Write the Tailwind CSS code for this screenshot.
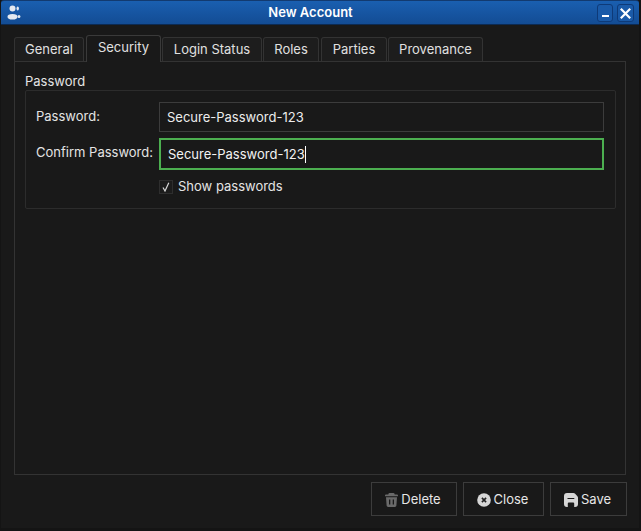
<!DOCTYPE html>
<html lang="en">
<head>
<meta charset="UTF-8">
<title>New Account</title>
<script src="https://cdn.jsdelivr.net/npm/@tailwindcss/browser@4"></script>
</head>
<body class="bg-[#141414] font-['Inter',sans-serif] text-[13px] text-[#e4e4e4] overflow-hidden">
<div class="w-[641px] h-[531px] flex flex-col bg-[#191919] border-l border-r-2 border-b-[3px] border-[#141414]">
  <!-- title bar -->
  <header class="relative h-[25px] shrink-0 flex items-center justify-center pr-[19px] rounded-t-[3px] border-t border-b border-t-[#123a70] border-b-[#0c2a52] bg-gradient-to-b from-[#1a5fb0] to-[#134c94]">
    <svg class="absolute left-[5px] top-[4px]" width="16" height="16" viewBox="0 0 16 16" fill="#e4e9f0">
      <ellipse cx="6.5" cy="3.5" rx="3" ry="3"/><ellipse cx="11.7" cy="3.5" rx="1.2" ry="2"/>
      <ellipse cx="6.5" cy="11.7" rx="5" ry="2.8"/><ellipse cx="13" cy="11.5" rx="1.4" ry="1.6"/>
    </svg>
    <h1 class="font-semibold text-[13px] text-white mt-[1px]">New Account</h1>
    <div class="absolute right-[5px] top-[3px] flex gap-[4px]">
      <button class="w-[16px] h-[18px] flex items-center justify-center rounded-[3px] border border-[#0e3a78] bg-[#1a5aa8]">
        <span class="w-[7px] h-[2px] mt-[5px] bg-white"></span>
      </button>
      <button class="w-[17px] h-[18px] flex items-center justify-center rounded-[3px] border border-[#0e3a78] bg-[#1a5aa8]">
        <svg width="11" height="11" viewBox="0 0 11 11" stroke="white" stroke-width="2.2"><path d="M.8.8 10.200 10.200M10.200.8 .8 10.200"/></svg>
      </button>
    </div>
  </header>

  <!-- tabs -->
  <div class="flex items-end h-[36px] pl-[13px] shrink-0 relative z-10 text-[#e0e0e0]">
    <div class="w-[70px] h-[24px] flex items-center justify-center rounded-t-[3px] border border-b-0 border-[#333] bg-[#1d1d1d]">General</div>
    <div class="w-[75px] h-[27px] ml-[2px] mb-[-1px] pb-[2px] flex items-center justify-center rounded-t-[3px] border border-b-0 border-[#3a3a3a] bg-[#191919]">Security</div>
    <div class="w-[100px] h-[24px] ml-[1px] flex items-center justify-center rounded-t-[3px] border border-b-0 border-[#333] bg-[#1d1d1d]">Login Status</div>
    <div class="w-[56px] h-[24px] ml-[1px] flex items-center justify-center rounded-t-[3px] border border-b-0 border-[#333] bg-[#1d1d1d]">Roles</div>
    <div class="w-[66px] h-[24px] ml-[2px] flex items-center justify-center rounded-t-[3px] border border-b-0 border-[#333] bg-[#1d1d1d]">Parties</div>
    <div class="w-[95px] h-[24px] ml-[1px] flex items-center justify-center rounded-t-[3px] border border-b-0 border-[#333] bg-[#1d1d1d]">Provenance</div>
  </div>

  <!-- tab pane -->
  <main class="ml-[13px] w-[612px] h-[414px] shrink-0 border border-[#333] pl-[10px] pr-[9px] pt-[11px]">
    <h2 class="leading-[16px] mb-[1px]">Password</h2>
    <section class="h-[119px] border border-[#2c2c2c] rounded-[2px] pl-[10px] pr-[11px] pt-[11px]">
      <div class="flex items-center h-[30px]">
        <label class="w-[123px]">Password:</label>
        <div class="flex-1 h-[30px] flex items-center pl-[7px] pt-[1px] border border-[#3c3c3c] text-[#ececec]">Secure-Password-123</div>
      </div>
      <div class="flex items-center h-[32px] mt-[6px]">
        <label class="w-[123px] mt-[-2px]">Confirm Password:</label>
        <div class="flex-1 h-[32px] flex items-center pl-[7px] pt-[1px] border-2 border-[#4caf50] text-[#f2f2f2]">Secure-Password-123<span class="w-px h-[17px] bg-white"></span></div>
      </div>
      <div class="flex items-center gap-[5px] mt-[7px] ml-[123px]">
        <span class="w-[14px] h-[14px] flex items-center justify-center border border-[#2e2e2e] bg-[#1c1c1c]">
          <svg width="10" height="10" viewBox="0 0 10 10" fill="none" stroke="#d8d8d8" stroke-width="1.2"><path d="M2 5.500 4 9 7.800 .8"/></svg>
        </span>
        <label>Show passwords</label>
      </div>
    </section>
  </main>

  <!-- footer buttons -->
  <footer class="flex justify-end gap-[6px] pt-[7px] pr-[12px] text-[#e6e6e6]">
    <button class="w-[86px] h-[34px] flex items-center justify-center gap-[3px] pt-[1px] pr-[2px] border border-[#3c3c3c]">
      <svg width="13" height="14" viewBox="0 0 13 14" fill="#6a6a6a"><path d="M4.500 0h4a1 1 0 0 1 1 .8l.2.7H12a1 1 0 0 1 1 1v.7H0v-.7a1 1 0 0 1 1-1h2.300l.2-.7a1 1 0 0 1 1-.8zM1 4.200h11l-.6 8.400a1.500 1.500 0 0 1-1.500 1.400H3.100a1.500 1.500 0 0 1-1.500-1.400zM4 6.500v5h1.300v-5zm3.700 0v5H9v-5z"/></svg>
      Delete
    </button>
    <button class="w-[81px] h-[34px] flex items-center justify-center gap-[3px] pt-[1px] pr-[2px] border border-[#3c3c3c]">
      <svg width="14" height="14" viewBox="0 0 14 14"><circle cx="7" cy="7" r="6.800" fill="#d6d6d6"/><path d="M4.900 4.900 9.100 9.100M9.100 4.900 4.900 9.100" stroke="#222" stroke-width="1.600"/></svg>
      Close
    </button>
    <button class="w-[77px] h-[34px] flex items-center justify-center gap-[3px] pt-[1px] pr-[2px] border border-[#3c3c3c]">
      <svg width="14" height="14" viewBox="0 0 14 14" fill="#d6d6d6"><path fill-rule="evenodd" d="M3 0h6.500a2 2 0 0 1 1.400.6l2.500 2.700a2 2 0 0 1 .6 1.400V11a3 3 0 0 1-3 3H3a3 3 0 0 1-3-3V3a3 3 0 0 1 3-3zM3.500 6h6.800V5H3.500zM3.800 10.500V14h6.400v-3.500a1 1 0 0 0-1-1H4.800a1 1 0 0 0-1 1z"/></svg>
      Save
    </button>
  </footer>
</div>
</body>
</html>
